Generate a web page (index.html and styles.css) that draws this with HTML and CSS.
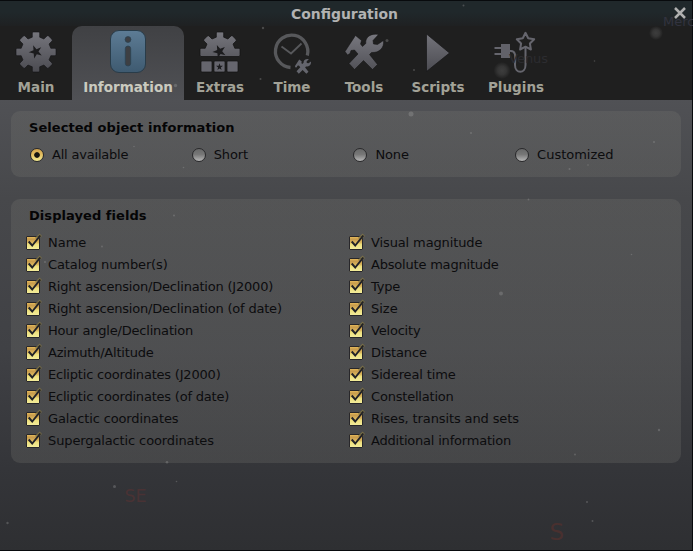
FILE: index.html
```
<!DOCTYPE html>
<html lang="en">
<head>
<meta charset="utf-8">
<title>Configuration</title>
<link rel="stylesheet" href="styles.css">
</head>
<body>
<svg class="defs" width="0" height="0">
  <defs>
    <linearGradient id="metal" gradientUnits="userSpaceOnUse" x1="0" y1="3" x2="0" y2="43"><stop offset="0" stop-color="#77777e"/><stop offset="1" stop-color="#4c4c52"/></linearGradient>
    <linearGradient id="blue" x1="0" y1="0" x2="0" y2="1"><stop offset="0" stop-color="#5d7c95"/><stop offset="1" stop-color="#3e5a70"/></linearGradient>
    <linearGradient id="gold" x1="0" y1="0" x2="0" y2="1"><stop offset="0" stop-color="#efc35e"/><stop offset=".2" stop-color="#c69a4c"/><stop offset=".45" stop-color="#d9b45c"/><stop offset=".6" stop-color="#eee07c"/><stop offset="1" stop-color="#f3ed9d"/></linearGradient>
    <path id="star" d="M0-7L1.6-2.2H6.7L2.6.8 4.1 5.7 0 2.7-4.1 5.7-2.6.8-6.7-2.2H-1.6z"/>
    <path id="hammer-wrench" d="M2 19.500L12.500 3.500 18.500 8.500 17.500 12 19.500 14.500 22.800 11.500C22 5 28 1 35.500 2.500L30 8.500 30.500 12 34.500 12.500 40.500 8.500C41.500 16 36 21 28.500 20.500L26.500 22.500 34.500 32.500 29.500 37.500 20.500 28.500 11.500 37.500 6 31.500 15 22 11.500 18 8 18.500 7 21.500 4.500 23z"/>
    <symbol id="check" viewBox="0 0 18 18"><rect x="1.500" y="3.500" width="13" height="13" rx=".5" fill="url(#gold)" stroke="#28272a"/><path d="M11 6L15.800 1.800" fill="none" stroke="#857844" stroke-width="3.400" opacity=".75"/><path d="M3.700 8.500L7.200 12.500 15.300 2.500" fill="none" stroke="#222227" stroke-width="1.900"/></symbol>
  </defs>
</svg>
<div class="window">
  <header class="title"><h1>Configuration</h1>
    <button class="close" aria-label="Close"><svg width="14" height="14" viewBox="0 0 14 14"><path d="M2 2L12 12M12 2L2 12" stroke="#b0b0b0" stroke-width="2.500"/></svg></button>
  </header>
  <nav class="tabs">
    <a class="tab main"><svg width="48" height="48" viewBox="0 0 48 48"><path fill="url(#metal)" stroke="#131315" stroke-width=".6" d="M20.3 9.2V5Q20.5 4 21.5 4H26.5Q27.5 4 27.7 5V9.2L31.9 11 35 8Q35.8 7.3 36.6 8L40 11.4Q40.7 12.2 40 13L37 16 38.8 20.3H43Q44 20.5 44 21.5V26.5Q44 27.5 43 27.7H38.8L37 31.9 40 35Q40.7 35.8 40 36.6L36.6 40Q35.8 40.7 35 40L31.9 37 27.7 38.8V43Q27.5 44 26.5 44H21.5Q20.5 44 20.3 43V38.8L16 37 13 40Q12.2 40.7 11.4 40L8 36.6Q7.3 35.8 8 35L11 31.9 9.2 27.7H5Q4 27.5 4 26.5V21.5Q4 20.500 5 20.300H9.200L11 16 8 13Q7.300 12.200 8 11.400L11.400 8Q12.200 7.300 13 8L16 11z"/><use href="#star" transform="translate(23.800 23.800) rotate(-22)" fill="#1c1c1e"/></svg><span>Main</span></a>
    <a class="tab information active"><svg width="48" height="48" viewBox="0 0 48 48"><rect x="6.500" y="2.500" width="35" height="42" rx="8.500" fill="url(#blue)" stroke="#293c49"/><g fill="#3d3f43" stroke="#2b4353" stroke-width=".8"><circle cx="24" cy="11.500" r="2.900"/><rect x="21.300" y="18" width="5.400" height="20" rx="2.700"/></g></svg><span>Information</span></a>
    <a class="tab extras"><svg width="48" height="48" viewBox="0 0 48 48"><path fill="url(#metal)" stroke="#111" stroke-width=".7" d="M20.3 9.2V5Q20.5 4 21.5 4H26.5Q27.5 4 27.7 5V9.2L31.9 11 35 8Q35.8 7.3 36.6 8L40 11.4Q40.7 12.2 40 13L37 16 38.8 20.3H43Q44 20.5 44 21.5V26.5Q44 28 43 28.5H5Q4 28 4 26.5V21.5Q4 20.5 5 20.3H9.2L11 16 8 13Q7.3 12.2 8 11.4L11.4 8Q12.2 7.3 13 8L16 11z"/><use href="#star" transform="translate(23.500 23.500) rotate(-22)" fill="#1c1c1e"/><g fill="#66666e" stroke="#111" stroke-width=".7"><rect x="5" y="33" width="11" height="11" rx="1"/><rect x="18" y="33" width="11" height="11" rx="1"/><rect x="31" y="33" width="11" height="11" rx="1"/></g><use href="#star" transform="translate(23.500 39) scale(.52)" fill="#1c1c1e"/></svg><span>Extras</span></a>
    <a class="tab time"><svg width="48" height="48" viewBox="0 0 48 48"><g fill="none" stroke="#57585b"><path stroke-width="3.300" d="M22.500 39.500A16.200 16.200 0 1 1 39.300 27.500"/><path stroke-width="1.800" d="M13.500 18.500L23 25.500 33.500 15.500"/></g><g transform="translate(26 30) scale(.42)" fill="#64656d"><use href="#hammer-wrench"/></g></svg><span>Time</span></a>
    <a class="tab tools"><svg width="48" height="48" viewBox="0 0 48 48"><g transform="translate(3 4)" fill="url(#metal)" stroke="#111" stroke-width=".5"><use href="#hammer-wrench"/></g></svg><span>Tools</span></a>
    <a class="tab scripts"><svg width="48" height="48" viewBox="0 0 48 48"><path d="M12.500 6V43.500L35.500 25z" fill="url(#metal)" stroke="#151517" stroke-width=".7"/></svg><span>Scripts</span></a>
    <a class="tab plugins"><svg width="48" height="48" viewBox="0 0 48 48"><g fill="none" stroke="#65656d"><path stroke-width="2" d="M2.500 20H9M2.500 26H9"/><path stroke-width="2" d="M18 23C25 22 23 31 23 37C23 46 33.500 46 33.500 37V19"/><path stroke-width="2" stroke-linejoin="round" d="M33.500 4.800L36.200 10.300 42.200 11.200 37.900 15.500 38.900 21.500 33.500 18.700 28.100 21.500 29.100 15.500 24.800 11.200 30.800 10.300z"/></g><rect x="9" y="16" width="9" height="14" fill="#626269"/></svg><span>Plugins</span></a>
  </nav>
  <main>
    <section class="card selection">
      <h2>Selected object information</h2>
      <div class="radios">
        <label class="tight"><i class="radio on"></i>All available</label><label><i class="radio"></i>Short</label><label><i class="radio"></i>None</label><label class="loose"><i class="radio"></i>Customized</label>
      </div>
    </section>
    <section class="card fields">
      <h2>Displayed fields</h2>
      <div class="columns">
        <div>
          <label class="loose"><svg><use href="#check"/></svg>Name</label>
          <label><svg><use href="#check"/></svg>Catalog number(s)</label>
          <label class="tight"><svg><use href="#check"/></svg>Right ascension/Declination (J2000)</label>
          <label class="tight"><svg><use href="#check"/></svg>Right ascension/Declination (of date)</label>
          <label class="tight"><svg><use href="#check"/></svg>Hour angle/Declination</label>
          <label class="tight"><svg><use href="#check"/></svg>Azimuth/Altitude</label>
          <label class="tight"><svg><use href="#check"/></svg>Ecliptic coordinates (J2000)</label>
          <label class="tight"><svg><use href="#check"/></svg>Ecliptic coordinates (of date)</label>
          <label><svg><use href="#check"/></svg>Galactic coordinates</label>
          <label><svg><use href="#check"/></svg>Supergalactic coordinates</label>
        </div>
        <div>
          <label><svg><use href="#check"/></svg>Visual magnitude</label>
          <label class="tight"><svg><use href="#check"/></svg>Absolute magnitude</label>
          <label class="tight"><svg><use href="#check"/></svg>Type</label>
          <label class="loose"><svg><use href="#check"/></svg>Size</label>
          <label class="tight"><svg><use href="#check"/></svg>Velocity</label>
          <label><svg><use href="#check"/></svg>Distance</label>
          <label><svg><use href="#check"/></svg>Sidereal time</label>
          <label class="tight"><svg><use href="#check"/></svg>Constellation</label>
          <label><svg><use href="#check"/></svg>Rises, transits and sets</label>
          <label class="tight"><svg><use href="#check"/></svg>Additional information</label>
        </div>
      </div>
    </section>
  </main>
</div>
<svg class="sky" width="693" height="551" viewBox="0 0 693 551">
  <defs><radialGradient id="glow"><stop offset="0" stop-color="#aaa" stop-opacity=".22"/><stop offset=".5" stop-color="#aaa" stop-opacity=".16"/><stop offset="1" stop-color="#aaa" stop-opacity="0"/></radialGradient></defs>
  <circle cx="656" cy="33" r="7" fill="url(#glow)"/><circle cx="502" cy="70.500" r="8.500" fill="url(#glow)"/>
  <g fill="#aaa" opacity=".3"><circle cx="411" cy="114" r="2.500"/><circle cx="175.500" cy="85.500" r="1.700"/><circle cx="501" cy="293.500" r="2"/><circle cx="114.500" cy="486.500" r="1.500"/><circle cx="167" cy="462.300" r="1.300"/><circle cx="7.500" cy="523" r="1.200"/><circle cx="263" cy="28" r="1.200"/><circle cx="463.500" cy="5.500" r="1"/><circle cx="387" cy="40.500" r="1.500"/><circle cx="260.500" cy="79" r="1"/><circle cx="414" cy="70" r="1"/><circle cx="594.500" cy="61" r=".8"/><circle cx="471" cy="133" r="1"/><circle cx="654" cy="142" r="1"/><circle cx="569.500" cy="169" r="1"/><circle cx="588" cy="165" r=".8"/><circle cx="174" cy="215.500" r="1"/><circle cx="45" cy="262" r="1"/><circle cx="102" cy="246.500" r=".9"/><circle cx="631.500" cy="254.500" r=".8"/><circle cx="587" cy="502" r="1"/><circle cx="592.500" cy="521" r="1"/><circle cx="575" cy="454.500" r=".9"/><circle cx="528.500" cy="199.500" r=".9"/><circle cx="659" cy="430" r="1.200"/><circle cx="134" cy="146.500" r=".8"/><circle cx="183.500" cy="167.500" r=".8"/><circle cx="176.500" cy="481.500" r=".8"/></g>
  <g font-family="DejaVu Sans"><text x="509" y="63" font-size="13" fill="#2c2c30">Venus</text><text x="663" y="26" font-size="13" fill="#32333f">Merc</text><text x="124.500" y="501.500" font-size="17.500" fill="#493234">SE</text><text x="549.500" y="539.500" font-size="23" fill="#49302f">S</text></g>
</svg>
</body>
</html>
```
FILE: styles.css
```
* { box-sizing: border-box; }
body { margin: 0; width: 693px; height: 551px; overflow: hidden; background: #080a0d; font: 13px/16px "DejaVu Sans", sans-serif; color: #0c0c0e; }
.defs { position: absolute; }
.window { width: 692px; height: 551px; padding: 1px 0; display: flex; flex-direction: column; position: relative; }
.title { height: 25px; flex: none; display: flex; align-items: center; justify-content: center; background: linear-gradient(#20282b, #20282b 45%, #1f2122); position: relative; }
h1 { margin: 0 3px 0 0; font-size: 13.9px; font-weight: bold; color: #b2b2b2; }
.close { position: absolute; right: 5px; top: 5px; width: 14px; height: 14px; padding: 0; border: 0; background: none; }
.close svg { display: block; }
.tabs { height: 74px; flex: none; display: flex; background: #1f1f1f; }
.tab { width: 72px; height: 74px; padding-top: 2px; display: flex; flex-direction: column; align-items: center; color: #a2a297; font-size: 13.5px; font-weight: bold; }
.tab svg { display: block; flex: none; }
.tab span { margin-top: 3px; white-space: nowrap; }
.tab.information { width: 112px; color: #cacabf; background: linear-gradient(#404144, #505155); border-radius: 10px 10px 0 0; }
.tab.scripts { width: 76px; }
.tab.plugins { width: 80px; }
main { flex: 1; padding: 11px 11px 0; background: linear-gradient(#505155 0, #47484b 22%, #404145 55%, #343539 82%, #2e2f32 100%); }
.card { background: linear-gradient(rgba(120,120,115,.26), rgba(120,120,115,.25)); border-radius: 9px; }
.selection { height: 66px; padding: 9px 18px; }
.fields { height: 264px; margin-top: 22px; padding: 9px 14px; }
h2 { margin: 0; font-size: 13px; line-height: 16px; font-weight: bold; letter-spacing: .06px; color: #050506; }
.fields h2 { padding-left: 4px; }
.radios { display: grid; grid-template-columns: repeat(4, 161.7px); margin-top: 11px; }
label { display: flex; align-items: center; white-space: nowrap; letter-spacing: -.12px; }
label.tight { letter-spacing: -.2px; }
label.loose { letter-spacing: 0; }
.radio { width: 14px; height: 14px; margin: 0 8px 0 1px; border: 1px solid #29292b; border-radius: 50%; background: linear-gradient(#686969, #777 45%, #b5b5b5); }
.radio.on { background: radial-gradient(circle, #151411 0 2.4px, transparent 3.2px), linear-gradient(#d2a34c, #e2bd60 45%, #f4eb91); }
.columns { display: grid; grid-template-columns: 323px 323px; margin-top: 8px; }
.columns label { height: 22px; }
.columns svg { width: 18px; height: 18px; margin-right: 5px; flex: none; transform: translateY(-1px); }
.sky { position: absolute; left: 0; top: 0; pointer-events: none; }
```
